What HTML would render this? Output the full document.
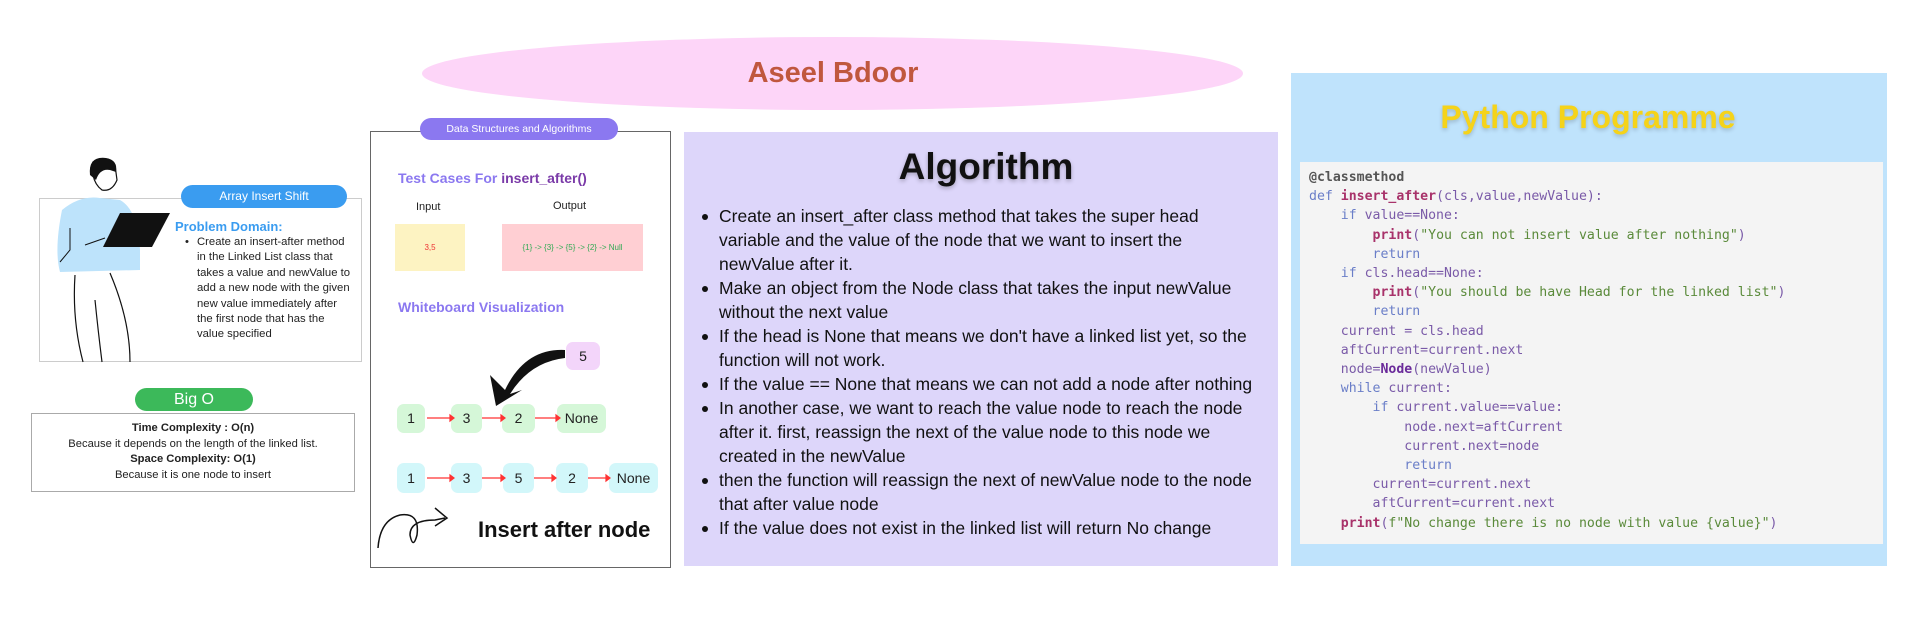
<!DOCTYPE html>
<html><head><meta charset="utf-8"><style>
*{margin:0;padding:0;box-sizing:border-box}
body{width:1920px;height:618px;background:#fff;position:relative;overflow:hidden;font-family:"Liberation Sans",sans-serif}
.a{position:absolute}
.pill{position:absolute;border-radius:12px;color:#fff;text-align:center}
.node{position:absolute;border-radius:7px;text-align:center;font-size:14px;color:#222}
.g{background:#d5f7d8}.c{background:#d2f7fa}
ul.alg{position:absolute;left:699px;top:204px;width:590px;font-size:17.5px;line-height:24px;color:#111;list-style:none;white-space:nowrap}
ul.alg li{padding-left:20px;position:relative}
ul.alg li:before{content:"";position:absolute;left:3px;top:10px;width:6px;height:6px;border-radius:50%;background:#111}
pre{position:absolute;left:1309px;top:168px;font-family:"DejaVu Sans Mono","Liberation Mono",monospace;font-size:13.2px;line-height:19.2px;color:#7a5aa8}
.k{color:#6a7ec8}.f{color:#a8326a;font-weight:bold}.s{color:#5a8a3a}.d{color:#555;font-weight:bold}
</style></head><body>
<div class="a" style="left:422px;top:37px;width:821px;height:73px;border-radius:50%;background:#fdd5f8"></div>
<div class="a" style="left:833px;top:57px;transform:translateX(-50%);font-size:29px;font-weight:bold;color:#c0573e">Aseel Bdoor</div>

<!-- left box -->
<div class="a" style="left:39px;top:198px;width:323px;height:164px;border:1.5px solid #ccc"></div>
<svg class="a" style="left:40px;top:150px" width="140" height="215" viewBox="0 0 140 215">
<path d="M22 60 Q40 45 60 48 L80 50 Q98 60 100 100 L100 120 L20 122 Q14 100 22 60Z" fill="#bde3fb"/>
<path d="M53 12 Q65 5 75 15 L77 30 Q72 42 62 40 Q55 35 53 25Z" fill="#fff" stroke="#111" stroke-width="1.2"/>
<path d="M50 25 Q48 6 66 8 Q78 10 76 22 L70 20 Q60 18 56 30Z" fill="#111"/>
<path d="M80 63 L130 63 L112 97 L63 97Z" fill="#111"/>
<path d="M35 125 Q32 170 43 212 M70 123 Q90 170 90 212 M55 150 Q58 180 62 212" fill="none" stroke="#111" stroke-width="1.2"/>
<path d="M30 78 L30 100 L20 112 M45 95 L65 88" fill="none" stroke="#111" stroke-width="1"/>
</svg>
<div class="pill" style="left:181px;top:185px;width:166px;height:23px;background:#3a9cf0;font-size:12px;line-height:23px">Array Insert Shift</div>
<div class="a" style="left:175px;top:219px;font-size:13px;color:#3a9cf0;font-weight:bold">Problem Domain:</div>
<div class="a" style="left:185px;top:235px;width:176px;font-size:11.3px;line-height:15.4px;color:#222;padding-left:12px;white-space:nowrap">
<span class="a" style="left:0;top:0">•</span>Create an insert-after method<br>in the Linked List class that<br>takes a value and newValue to<br>add a new node with the given<br>new value immediately after<br>the first node that has the<br>value specified</div>

<div class="a" style="left:31px;top:413px;width:324px;height:79px;border:1.5px solid #aaa"></div>
<div class="pill" style="left:135px;top:388px;width:118px;height:23px;background:#3cb95a;font-size:16px;line-height:23px">Big O</div>
<div class="a" style="left:31px;top:421px;width:324px;text-align:center;font-size:11.2px;line-height:15.5px;color:#222"><b>Time Complexity : O(n)</b><br>Because it depends on the length of the linked list.<br><b>Space Complexity: O(1)</b><br>Because it is one node to insert</div>

<!-- middle -->
<div class="a" style="left:370px;top:131px;width:301px;height:437px;border:1.5px solid #666"></div>
<div class="pill" style="left:420px;top:118px;width:198px;height:22px;background:#8b78f0;font-size:10.5px;line-height:22px">Data Structures and Algorithms</div>
<div class="a" style="left:398px;top:170px;font-size:14px;color:#8b78f0;font-weight:bold">Test Cases For <span style="color:#7a3aa8">insert_after()</span></div>
<div class="a" style="left:416px;top:201px;font-size:11px;color:#222">Input</div>
<div class="a" style="left:553px;top:200px;font-size:11px;color:#222">Output</div>
<div class="a" style="left:395px;top:224px;width:70px;height:47px;background:#fdf3c2;color:#e33;font-size:8px;text-align:center;line-height:47px">3,5</div>
<div class="a" style="left:502px;top:224px;width:141px;height:47px;background:#ffcfd3;color:#3a5;font-size:8px;text-align:center;line-height:47px">{1} -&gt; {3} -&gt; {5} -&gt; {2} -&gt; Null</div>
<div class="a" style="left:398px;top:299px;font-size:14px;color:#8b78f0;font-weight:bold">Whiteboard Visualization</div>
<div class="node" style="left:566px;top:342px;width:34px;height:28px;line-height:28px;background:#f3d5fa">5</div>
<svg class="a" style="left:480px;top:340px" width="90" height="70"><path d="M85 10 Q45 8 25 50 L10 35 L16 66 L42 50 L30 54 Q50 22 85 18Z" fill="#111"/></svg>
<div class="node g" style="left:397px;top:404px;width:28px;height:29px;line-height:29px">1</div>
<div class="node g" style="left:451px;top:404px;width:31px;height:29px;line-height:29px">3</div>
<div class="node g" style="left:502px;top:404px;width:33px;height:29px;line-height:29px">2</div>
<div class="node g" style="left:557px;top:404px;width:49px;height:29px;line-height:29px">None</div>
<div class="node c" style="left:397px;top:463px;width:28px;height:30px;line-height:30px">1</div>
<div class="node c" style="left:451px;top:463px;width:31px;height:30px;line-height:30px">3</div>
<div class="node c" style="left:503px;top:463px;width:31px;height:30px;line-height:30px">5</div>
<div class="node c" style="left:556px;top:463px;width:32px;height:30px;line-height:30px">2</div>
<div class="node c" style="left:609px;top:463px;width:49px;height:30px;line-height:30px">None</div>
<svg class="a" style="left:370px;top:400px" width="300" height="100" stroke="#f33" fill="#f33" stroke-width="1.2">
<path d="M57 18 H80 M112 18 H131 M165 18 H186"/><path d="M80 15 L84 18 L80 21Z M131 15 L135 18 L131 21Z M186 15 L190 18 L186 21Z"/>
<path d="M57 78 H80 M112 78 H131 M164 78 H182 M218 78 H236"/><path d="M80 75 L84 78 L80 81Z M131 75 L135 78 L131 81Z M182 75 L186 78 L182 81Z M236 75 L240 78 L236 81Z"/>
</svg>
<svg class="a" style="left:375px;top:500px" width="100" height="50"><path d="M3 48 Q5 20 25 15 Q45 12 42 35 Q38 50 35 35 Q35 20 60 20 L70 18 M60 8 L72 18 L60 26" fill="none" stroke="#111" stroke-width="1.5"/></svg>
<div class="a" style="left:478px;top:517px;font-size:22px;font-weight:bold;color:#111">Insert after node</div>

<!-- algorithm -->
<div class="a" style="left:684px;top:132px;width:594px;height:434px;background:#ddd6fa"></div>
<div class="a" style="left:986px;top:146px;transform:translateX(-50%);font-size:37px;font-weight:bold;color:#111;text-shadow:0 2px 4px rgba(0,0,0,.25)">Algorithm</div>
<ul class="alg">
<li>Create an insert_after class method that takes the super head<br>variable and the value of the node that we want to insert the<br>newValue after it.</li>
<li>Make an object from the Node class that takes the input newValue<br>without the next value</li>
<li>If the head is None that means we don't have a linked list yet, so the<br>function will not work.</li>
<li>If the value == None that means we can not add a node after nothing</li>
<li>In another case, we want to reach the value node to reach the node<br>after it. first, reassign the next of the value node to this node we<br>created in the newValue</li>
<li>then the function will reassign the next of newValue node to the node<br>that after value node</li>
<li>If the value does not exist in the linked list will return No change</li>
</ul>

<!-- python -->
<div class="a" style="left:1291px;top:73px;width:596px;height:493px;background:#bfe3fc"></div>
<div class="a" style="left:1588px;top:99px;transform:translateX(-50%);font-size:32px;font-weight:bold;color:#f5d31a;text-shadow:0 2px 4px rgba(0,0,0,.2);white-space:nowrap">Python Programme</div>
<div class="a" style="left:1300px;top:162px;width:583px;height:382px;background:#f4f4f4"></div>
<pre><span class="d">@classmethod</span>
<span class="k">def</span> <span class="f">insert_after</span>(cls,value,newValue):
    <span class="k">if</span> value==None:
        <span class="f">print</span>(<span class="s">"You can not insert value after nothing"</span>)
        <span class="k">return</span>
    <span class="k">if</span> cls.head==None:
        <span class="f">print</span>(<span class="s">"You should be have Head for the linked list"</span>)
        <span class="k">return</span>
    current = cls.head
    aftCurrent=current.next
    node=<b style="color:#6a2a9a">Node</b>(newValue)
    <span class="k">while</span> current:
        <span class="k">if</span> current.value==value:
            node.next=aftCurrent
            current.next=node
            <span class="k">return</span>
        current=current.next
        aftCurrent=current.next
    <span class="f">print</span>(<span class="s">f"No change there is no node with value {value}"</span>)</pre>
</body></html>
